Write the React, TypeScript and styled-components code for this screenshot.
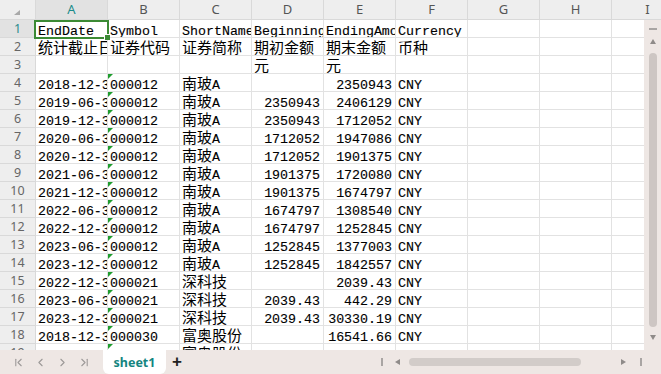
import React from 'react';
import styled, { createGlobalStyle } from 'styled-components';
import { ChevronFirst, ChevronLast, ChevronLeft, ChevronRight } from 'lucide-react';

const GlobalStyle = createGlobalStyle`
    html, body {
        margin: 0;
        padding: 0;
        overflow: hidden;
        background: #ffffff;
    }
`

const COLUMNS = ["A", "B", "C", "D", "E", "F", "G", "H", "I"]

const ROWS: string[][] = [
    ["EndDate", "Symbol", "ShortName", "BeginningAmount", "EndingAmount", "Currency"],
    ["统计截止日期", "证券代码", "证券简称", "期初金额", "期末金额", "币种"],
    ["", "", "", "元", "元", ""],
    ["2018-12-31", "000012", "南玻A", "", "2350943", "CNY"],
    ["2019-06-30", "000012", "南玻A", "2350943", "2406129", "CNY"],
    ["2019-12-31", "000012", "南玻A", "2350943", "1712052", "CNY"],
    ["2020-06-30", "000012", "南玻A", "1712052", "1947086", "CNY"],
    ["2020-12-31", "000012", "南玻A", "1712052", "1901375", "CNY"],
    ["2021-06-30", "000012", "南玻A", "1901375", "1720080", "CNY"],
    ["2021-12-31", "000012", "南玻A", "1901375", "1674797", "CNY"],
    ["2022-06-30", "000012", "南玻A", "1674797", "1308540", "CNY"],
    ["2022-12-31", "000012", "南玻A", "1674797", "1252845", "CNY"],
    ["2023-06-30", "000012", "南玻A", "1252845", "1377003", "CNY"],
    ["2023-12-31", "000012", "南玻A", "1252845", "1842557", "CNY"],
    ["2022-12-31", "000021", "深科技", "", "2039.43", "CNY"],
    ["2023-06-30", "000021", "深科技", "2039.43", "442.29", "CNY"],
    ["2023-12-31", "000021", "深科技", "2039.43", "30330.19", "CNY"],
    ["2018-12-31", "000030", "富奥股份", "", "16541.66", "CNY"],
    ["2019-06-30", "000030", "富奥股份", "16541.66", "15873.20", "CNY"],
]

const isNumber = (value: string) => /^\d+(\.\d+)?$/.test(value)

// CJK runs get their own size, like SimSun's wider ideographs
const renderText = (value: string) =>
    value.split(/([\u4e00-\u9fff]+)/).filter(Boolean).map((part, i) =>
        /[\u4e00-\u9fff]/.test(part) ? <Cjk key={i}>{part}</Cjk> : <React.Fragment key={i}>{part}</React.Fragment>
    )

export default function App() {
    return (
        <>
            <GlobalStyle />
            <Page>
                <Main>
                    <HeaderRow>
                        <Corner>
                            <svg width="6" height="5" viewBox="0 0 6 5"><polygon points="6,0 6,5 0,5" fill="#a9a9a9" /></svg>
                        </Corner>
                        {COLUMNS.map(col => (
                            <ColHeader key={col} $active={col === "A"}>{col}</ColHeader>
                        ))}
                    </HeaderRow>
                    <Body>
                        <Sheet>
                            {ROWS.map((row, r) => (
                                <React.Fragment key={r}>
                                    <RowNum $active={r === 0}>{r + 1}</RowNum>
                                    {COLUMNS.map((col, c) => {
                                        const value = row[c] ?? ""
                                        const numeric = c >= 3 && isNumber(value)
                                        return (
                                            <Cell key={col} $right={numeric}>
                                                {c === 1 && r >= 3 && <TextMark />}
                                                {renderText(value)}
                                            </Cell>
                                        )
                                    })}
                                </React.Fragment>
                            ))}
                            <Selection><Handle /></Selection>
                        </Sheet>
                        <VScroll>
                            <Dash />
                            <Arrow $dir="up" />
                            <VThumb />
                            <Arrow $dir="down" />
                        </VScroll>
                    </Body>
                </Main>
                <TabBar>
                    <NavGroup>
                        <ChevronFirst size={13} strokeWidth={2} />
                        <ChevronLeft size={13} strokeWidth={2} />
                        <ChevronRight size={13} strokeWidth={2} />
                        <ChevronLast size={13} strokeWidth={2} />
                    </NavGroup>
                    <Tab>sheet1</Tab>
                    <Plus>+</Plus>
                    <HScroll>
                        <Tick />
                        <Arrow $dir="left" />
                        <HThumb />
                        <Arrow $dir="right" />
                        <Tick />
                    </HScroll>
                </TabBar>
            </Page>
        </>
    )
}

const GRID = "36px repeat(9, 72px)"

const Page = styled.div`
    width: 661px;
    height: 374px;
    display: flex;
    flex-direction: column;
    background: #ffffff;
    overflow: hidden;
`

const Main = styled.div`
    height: 350px;
    display: flex;
    flex-direction: column;
`

const HeaderRow = styled.div`
    height: 20px;
    display: grid;
    grid-template-columns: ${GRID};
    background: #eeeeee;
    overflow: hidden;
`

const Corner = styled.div`
    box-sizing: border-box;
    border-right: 1px solid #d9d9d9;
    border-bottom: 1px solid #d9d9d9;
    display: flex;
    align-items: flex-start;
    justify-content: flex-end;
    padding: 10px 15px 0 0;
`

const ColHeader = styled.div<{ $active: boolean }>`
    box-sizing: border-box;
    border-right: 1px solid #d9d9d9;
    border-bottom: 1px solid #d9d9d9;
    background: ${props => props.$active ? "#e2e2e2" : "transparent"};
    color: ${props => props.$active ? "#1a8c8a" : "#555555"};
    font-family: "Noto Sans", "Liberation Sans", sans-serif;
    font-size: 13px;
    line-height: 19px;
    text-align: center;
`

const Body = styled.div`
    flex: 1;
    display: flex;
    min-height: 0;
`

const Sheet = styled.div`
    position: relative;
    flex: 1;
    display: grid;
    grid-template-columns: ${GRID};
    grid-auto-rows: 18px;
    overflow: hidden;
`

const RowNum = styled.div<{ $active: boolean }>`
    box-sizing: border-box;
    border-right: 1px solid #d9d9d9;
    border-bottom: 1px solid #d9d9d9;
    background: ${props => props.$active ? "#e2e2e2" : "#eeeeee"};
    color: ${props => props.$active ? "#2a8a8c" : "#666666"};
    font-family: "Noto Sans", "Liberation Sans", sans-serif;
    font-size: 12.5px;
    line-height: 17px;
    text-align: center;
`

const Cell = styled.div<{ $right: boolean }>`
    position: relative;
    box-sizing: border-box;
    border-right: 1px solid #e2e2e2;
    border-bottom: 1px solid #e2e2e2;
    padding: 3px ${props => props.$right ? "3px" : "2px"} 0 2px;
    font-family: "Liberation Mono", "Noto Sans CJK SC", monospace;
    font-size: 13.3px;
    line-height: 18px;
    color: #000000;
    -webkit-text-stroke: 0.12px #000000;
    text-align: ${props => props.$right ? "right" : "left"};
    white-space: nowrap;
    overflow: hidden;
`

const Cjk = styled.span`
    font-family: "Noto Sans CJK SC", sans-serif;
    font-size: 15px;
    line-height: 0;
    -webkit-text-stroke: 0;
`

const TextMark = styled.span`
    position: absolute;
    top: 0;
    left: 0;
    width: 0;
    height: 0;
    border-top: 5px solid #1f9d2e;
    border-right: 5px solid transparent;
`

const Selection = styled.div`
    position: absolute;
    top: 0;
    left: 34px;
    width: 75px;
    height: 19px;
    box-sizing: border-box;
    border: 2px solid #3b8a34;
    pointer-events: none;
`

const Handle = styled.div`
    position: absolute;
    right: -3px;
    bottom: -3px;
    width: 5px;
    height: 5px;
    background: #3b8a34;
    border-left: 1px solid #ffffff;
    border-top: 1px solid #ffffff;
`

const VScroll = styled.div`
    width: 17px;
    background: #eee7e4;
    display: flex;
    flex-direction: column;
    align-items: center;
    padding: 8px 0 10px;
    box-sizing: border-box;
`

const Dash = styled.div`
    width: 8px;
    height: 2px;
    background: #a9a5a3;
    margin-bottom: 9px;
`

const Arrow = styled.div<{ $dir: "up" | "down" | "left" | "right" }>`
    width: 0;
    height: 0;
    flex-shrink: 0;
    ${props => props.$dir === "up" && `
        border-left: 3.5px solid transparent;
        border-right: 3.5px solid transparent;
        border-bottom: 5px solid #8f8b89;
    `}
    ${props => props.$dir === "down" && `
        border-left: 3.5px solid transparent;
        border-right: 3.5px solid transparent;
        border-top: 5px solid #8f8b89;
    `}
    ${props => props.$dir === "left" && `
        border-top: 3.5px solid transparent;
        border-bottom: 3.5px solid transparent;
        border-right: 5px solid #8f8b89;
    `}
    ${props => props.$dir === "right" && `
        border-top: 3.5px solid transparent;
        border-bottom: 3.5px solid transparent;
        border-left: 5px solid #8f8b89;
    `}
`

const VThumb = styled.div`
    width: 8px;
    flex: 1;
    margin: 9px 0 8px;
    border-radius: 4px;
    background: #cdc6c3;
`

const TabBar = styled.div`
    flex: 1;
    display: flex;
    align-items: stretch;
    background: #eee7e4;
`

const NavGroup = styled.div`
    display: flex;
    align-items: center;
    gap: 9px;
    padding-left: 12px;
    color: #9c9998;
`

const Tab = styled.div`
    margin-left: 12px;
    width: 63px;
    background: #ffffff;
    border-radius: 0 0 6px 6px;
    display: flex;
    align-items: center;
    justify-content: center;
    color: #14857f;
    font-family: "Noto Sans", "Liberation Sans", sans-serif;
    font-weight: 700;
    font-size: 12.5px;
`

const Plus = styled.div`
    margin-left: 6px;
    display: flex;
    align-items: center;
    font-family: "Liberation Sans", sans-serif;
    font-weight: 700;
    font-size: 17px;
    color: #222222;
`

const HScroll = styled.div`
    margin-left: auto;
    margin-right: 17px;
    width: 266px;
    display: flex;
    align-items: center;
    padding-left: 3px;
    box-sizing: border-box;
`

const Tick = styled.div`
    width: 2px;
    height: 8px;
    background: #a9a5a3;
    flex-shrink: 0;
    &:first-child {
        margin-right: 12px;
    }
    &:last-child {
        margin-left: 14px;
    }
`

const HThumb = styled.div`
    width: 172px;
    height: 8px;
    margin: 0 40px 0 9px;
    border-radius: 4px;
    background: #d2ccc9;
`
